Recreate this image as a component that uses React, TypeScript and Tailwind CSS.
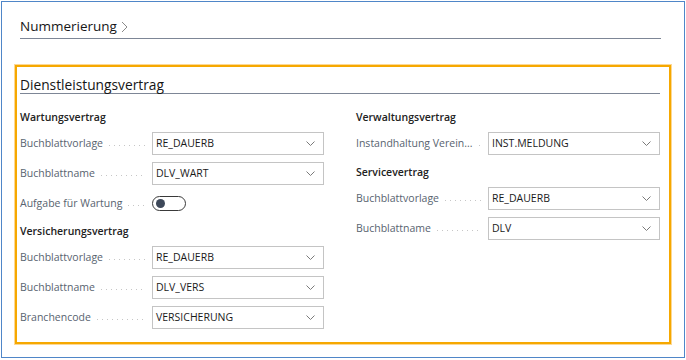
const font = "font-['Open_Sans',sans-serif]";

function Chevron() {
  return (
    <svg width="9" height="5" viewBox="0 0 9 5" className="shrink-0">
      <path d="M0.5 0.5 L4.5 4.5 L8.5 0.5" fill="none" stroke="#7a7a7a" strokeWidth="1" />
    </svg>
  );
}

function Leader() {
  return (
    <span className="flex-1 h-px mt-[4px] mx-[6px] min-w-[4px] bg-[linear-gradient(to_right,#c6c6c6_1px,transparent_1px)] bg-[length:5px_1px] bg-repeat-x" />
  );
}

function Field({ label, value }: { label: string; value: string }) {
  return (
    <div className="flex items-center h-[23px]">
      <div className="flex items-center w-[132px] pr-[1px]">
        <span className="text-[10.5px] text-[#58636f] whitespace-nowrap">{label}</span>
        <Leader />
      </div>
      <div className="flex items-center justify-between w-[172px] h-[23px] border border-[#c4c4c4] bg-white pl-[3px] pr-[8px]">
        <span className="text-[10.5px] text-[#1a1a1a]">{value}</span>
        <Chevron />
      </div>
    </div>
  );
}

function Toggle({ label }: { label: string }) {
  return (
    <div className="flex items-center h-[23px]">
      <div className="flex items-center w-[132px] pr-[1px]">
        <span className="text-[10.5px] text-[#58636f] whitespace-nowrap">{label}</span>
        <Leader />
      </div>
      <div className="flex items-center w-[34px] h-[15px] rounded-full border border-[#3a3a3a] pl-[3px]">
        <span className="w-[9px] h-[9px] rounded-full bg-[#3d4859]" />
      </div>
    </div>
  );
}

function Group({ title, className = "" }: { title: string; className?: string }) {
  return (
    <div className={`h-[16px] leading-[16px] text-[10.5px] font-semibold text-[#222] ${className}`}>
      {title}
    </div>
  );
}

export default function App() {
  return (
    <div className={`${font} bg-white w-[686px] h-[360px]`}>
      <div className="ml-[1px] mt-[1px] w-[684px] h-[357px] border border-[#4f86c8]">
        <div className="ml-[18px] w-[641px] h-[37px] pt-[15px] border-b border-[#7d8696] flex items-start gap-[4px]">
          <span className="text-[13.5px] leading-[18px] text-[#161616]">Nummerierung</span>
          <svg width="7" height="12" viewBox="0 0 7 12" className="mt-[4px]">
            <path d="M1 1 L6 6 L1 11" fill="none" stroke="#8a8a8a" strokeWidth="1" />
          </svg>
        </div>

        <div className="mt-[26px] ml-[13px] w-[656px] h-[279px] border-2 border-[#f6a800] shadow-[0_0_0_1px_#fcd894] pl-[3px] pr-[9px]">
          <div className="h-[27px] pt-[5px] border-b border-[#7d8696]">
            <span className="text-[13.75px] leading-[18px] text-[#161616]">Dienstleistungsvertrag</span>
          </div>

          <div className="mt-[15px] grid grid-cols-2 gap-x-8">
            <div className="flex flex-col gap-[7px]">
              <Group title="Wartungsvertrag" />
              <Field label="Buchblattvorlage" value="RE_DAUERB" />
              <Field label="Buchblattname" value="DLV_WART" />
              <Toggle label="Aufgabe für Wartung" />
              <Group title="Versicherungsvertrag" className="mt-[1px]" />
              <Field label="Buchblattvorlage" value="RE_DAUERB" />
              <Field label="Buchblattname" value="DLV_VERS" />
              <Field label="Branchencode" value="VERSICHERUNG" />
            </div>
            <div className="flex flex-col gap-[7px]">
              <Group title="Verwaltungsvertrag" />
              <Field label="Instandhaltung Verein..." value="INST.MELDUNG" />
              <Group title="Servicevertrag" className="mt-[2px]" />
              <Field label="Buchblattvorlage" value="RE_DAUERB" />
              <Field label="Buchblattname" value="DLV" />
            </div>
          </div>
        </div>
      </div>
    </div>
  );
}
